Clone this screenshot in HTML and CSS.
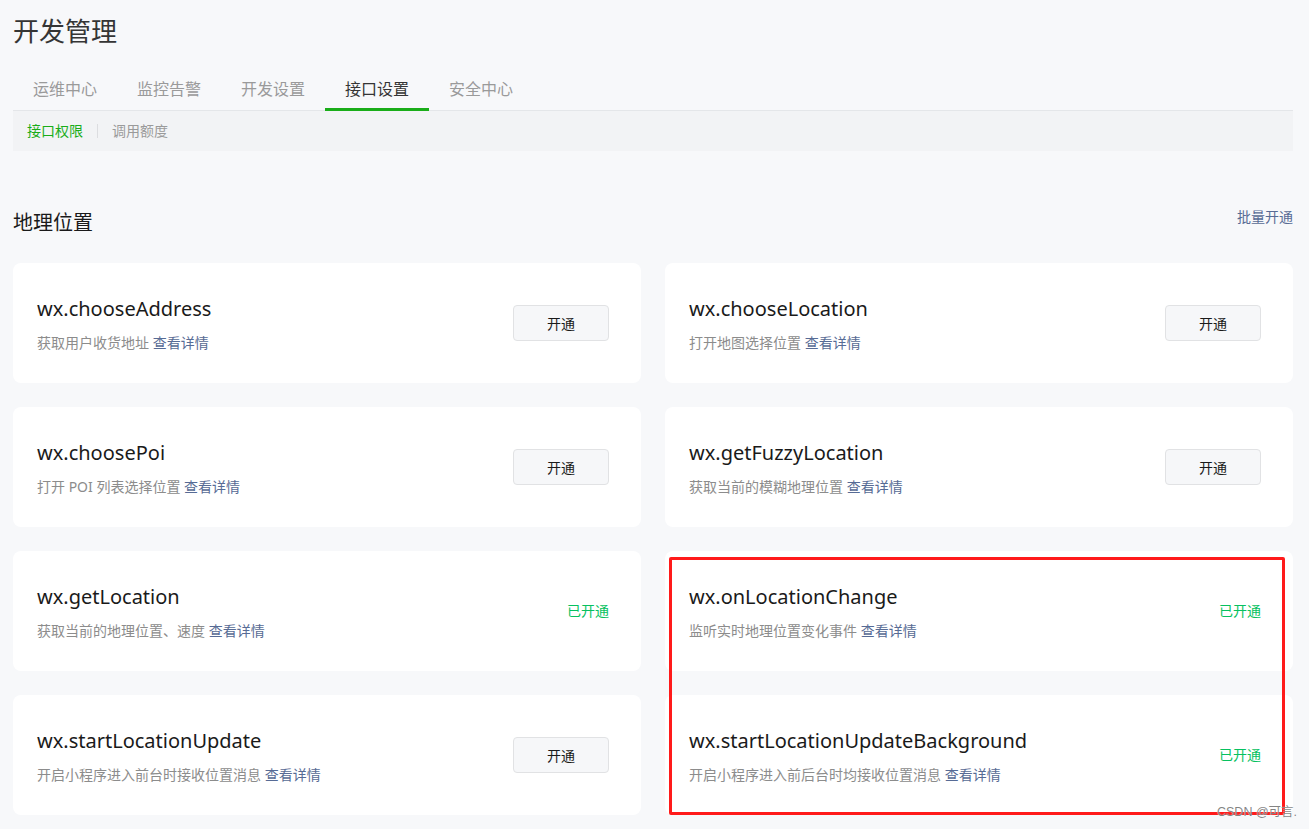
FILE: index.html
```html
<!DOCTYPE html>
<html lang="zh-CN">
<head>
<meta charset="utf-8">
<title>开发管理</title>
<link rel="stylesheet" href="styles.css">
</head>
<body>
<div class="page">
  <h1 class="page-title">开发管理</h1>
  <nav class="tabs">
    <a class="tab">运维中心</a>
    <a class="tab">监控告警</a>
    <a class="tab">开发设置</a>
    <a class="tab active">接口设置</a>
    <a class="tab">安全中心</a>
  </nav>
  <div class="subtabs">
    <a class="subtab active">接口权限</a>
    <span class="subtab-sep"></span>
    <a class="subtab">调用额度</a>
  </div>

  <section class="group">
    <div class="group-head">
      <h2 class="group-title">地理位置</h2>
      <a class="link batch">批量开通</a>
    </div>
    <div class="grid">
      <div class="card">
        <div class="card-info">
          <div class="api-name">wx.chooseAddress</div>
          <div class="api-desc">获取用户收货地址 <a class="link">查看详情</a></div>
        </div>
        <button class="btn">开通</button>
      </div>
      <div class="card">
        <div class="card-info">
          <div class="api-name">wx.chooseLocation</div>
          <div class="api-desc">打开地图选择位置 <a class="link">查看详情</a></div>
        </div>
        <button class="btn">开通</button>
      </div>
      <div class="card">
        <div class="card-info">
          <div class="api-name">wx.choosePoi</div>
          <div class="api-desc">打开 POI 列表选择位置 <a class="link">查看详情</a></div>
        </div>
        <button class="btn">开通</button>
      </div>
      <div class="card">
        <div class="card-info">
          <div class="api-name">wx.getFuzzyLocation</div>
          <div class="api-desc">获取当前的模糊地理位置 <a class="link">查看详情</a></div>
        </div>
        <button class="btn">开通</button>
      </div>
      <div class="card">
        <div class="card-info">
          <div class="api-name">wx.getLocation</div>
          <div class="api-desc">获取当前的地理位置、速度 <a class="link">查看详情</a></div>
        </div>
        <span class="status">已开通</span>
      </div>
      <div class="card">
        <div class="card-info">
          <div class="api-name">wx.onLocationChange</div>
          <div class="api-desc">监听实时地理位置变化事件 <a class="link">查看详情</a></div>
        </div>
        <span class="status">已开通</span>
      </div>
      <div class="card">
        <div class="card-info">
          <div class="api-name">wx.startLocationUpdate</div>
          <div class="api-desc">开启小程序进入前台时接收位置消息 <a class="link">查看详情</a></div>
        </div>
        <button class="btn">开通</button>
      </div>
      <div class="card">
        <div class="card-info">
          <div class="api-name">wx.startLocationUpdateBackground</div>
          <div class="api-desc">开启小程序进入前后台时均接收位置消息 <a class="link">查看详情</a></div>
        </div>
        <span class="status">已开通</span>
      </div>
    </div>
  </section>
</div>
<div class="annotation"></div>
<div class="watermark">CSDN @可言.</div>
</body>
</html>
```

FILE: styles.css
```css
html, body {
  margin: 0;
  padding: 0;
  height: 100%;
  overflow: hidden;
}
body {
  background: #f7f8fa;
  font-family: "Noto Sans", "Noto Sans CJK SC", sans-serif;
  color: #1a1a1a;
  position: relative;
}
.page {
  width: 1280px;
  padding: 13px 0 0 13px;
}
.page-title {
  margin: 0;
  font-size: 26px;
  line-height: 36px;
  font-weight: 400;
  color: #353535;
}
.tabs {
  display: flex;
  margin-top: 21px;
  border-bottom: 1px solid #e4e6e9;
}
.tab {
  position: relative;
  padding: 0 20px;
  height: 40px;
  line-height: 38px;
  font-size: 16px;
  color: #9a9a9a;
}
.tab.active {
  color: #353535;
}
.tab.active::after {
  content: "";
  position: absolute;
  left: 0;
  right: 0;
  bottom: -1px;
  height: 3px;
  background: #1aad19;
}
.subtabs {
  display: flex;
  align-items: center;
  height: 40px;
  padding-left: 14px;
  background: #f2f3f5;
  font-size: 14px;
}
.subtab {
  color: #9a9a9a;
  line-height: 20px;
}
.subtab.active {
  color: #1aad19;
}
.subtab-sep {
  width: 1px;
  height: 14px;
  margin: 0 14px;
  background: #dcdde0;
}
.group {
  margin-top: 56px;
}
.group-head {
  display: flex;
  justify-content: space-between;
  align-items: flex-start;
}
.group-title {
  margin: 2px 0 0;
  font-size: 20px;
  line-height: 28px;
  font-weight: 400;
  color: #1a1a1a;
}
.link {
  color: #576b95;
  text-decoration: none;
}
.batch {
  font-size: 14px;
  line-height: 20px;
}
.grid {
  margin-top: 26px;
  display: grid;
  grid-template-columns: 1fr 1fr;
  gap: 24px;
}
.card {
  height: 120px;
  box-sizing: border-box;
  background: #fff;
  border-radius: 8px;
  padding: 0 32px 0 24px;
  display: flex;
  align-items: center;
  justify-content: space-between;
}
.card-info {
  padding-top: 2px;
}
.api-name {
  font-size: 20px;
  line-height: 28px;
  color: #1a1a1a;
}
.api-desc {
  margin-top: 10px;
  font-size: 14px;
  line-height: 20px;
  color: #8c8c8c;
}
.btn {
  width: 96px;
  height: 36px;
  border: 1px solid #e1e2e4;
  border-radius: 4px;
  background: #f6f7f9;
  font-family: "Noto Sans CJK SC", sans-serif;
  font-size: 14px;
  color: #1a1a1a;
  padding: 0;
}
.status {
  font-size: 14px;
  line-height: 20px;
  color: #07c160;
}
.annotation {
  position: absolute;
  left: 669px;
  top: 557px;
  width: 616px;
  height: 258px;
  box-sizing: border-box;
  border: 3px solid #ff1a1a;
  border-radius: 2px;
  pointer-events: none;
}
.watermark {
  position: absolute;
  left: 1217px;
  top: 804px;
  font-family: "Liberation Sans", "Noto Sans CJK SC", sans-serif;
  font-size: 12.5px;
  line-height: 16px;
  color: rgba(110, 110, 110, 0.85);
  text-shadow: 0 0 1px #fff;
  white-space: nowrap;
}
```
